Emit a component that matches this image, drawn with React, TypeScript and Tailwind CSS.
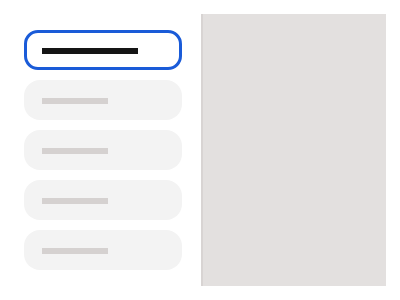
import React from 'react';

const rows = [0, 1, 2, 3];

export default function App() {
  return (
    <div className="flex h-[300px] w-[400px] items-start bg-white pl-[24px]">
      <div className="mt-[30px] flex w-[158px] flex-col gap-[10px]">
        {/* Selected item */}
        <div className="flex h-[40px] items-center rounded-[14px] border-[3px] border-[#1a5bd8] bg-white pl-[15px]">
          <div className="mt-[2px] h-[6px] w-[96px] bg-[#151515]" />
        </div>
        {rows.map((r) => (
          <div key={r} className="flex h-[40px] items-center rounded-[16px] bg-[#f3f3f3] pl-[18px]">
            <div className="mt-[2px] h-[6px] w-[66px] bg-[#d5d1d0]" />
          </div>
        ))}
      </div>
      {/* Preview panel */}
      <div className="ml-[19px] mt-[14px] h-[272px] w-[185px] border-l-2 border-[#d8d4d3] bg-[#e3e0df]" />
    </div>
  );
}
